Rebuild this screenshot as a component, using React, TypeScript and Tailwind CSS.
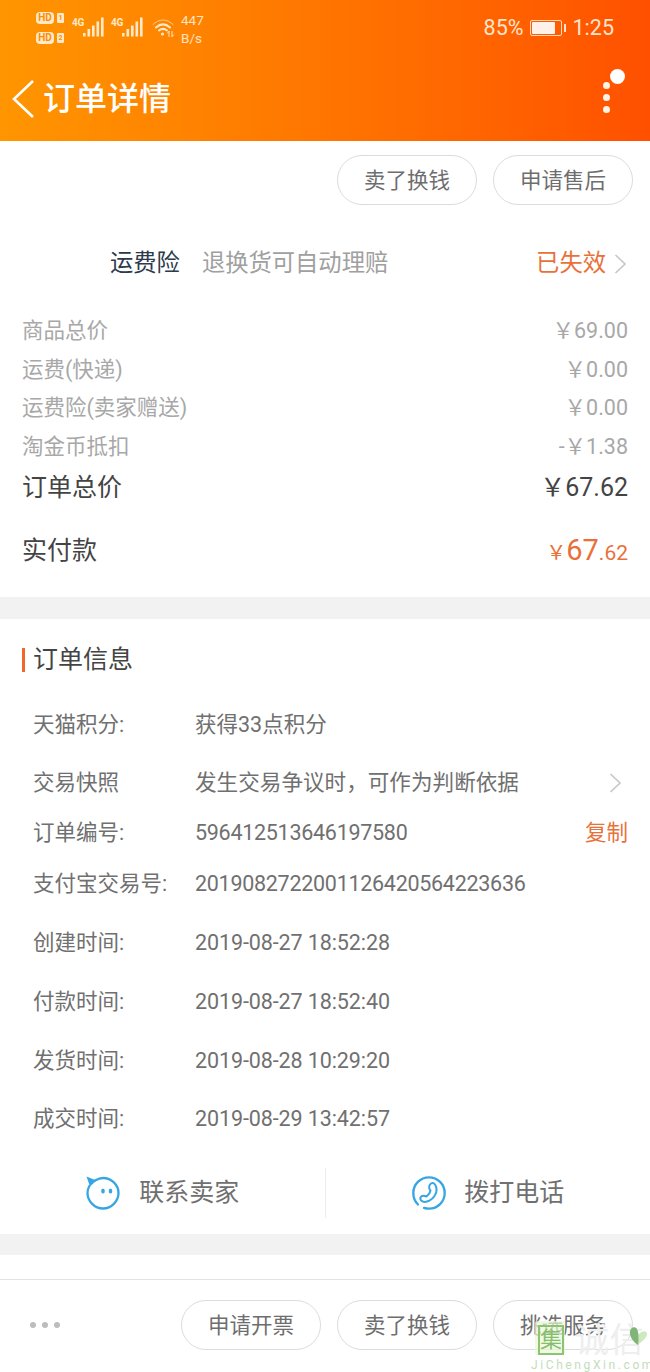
const cjk = 'font-["Roboto","Noto_Sans_CJK_SC",sans-serif]';

const priceRows = [
    { label: '商品总价', value: '￥69.00', h: 'h-[39px]' },
    { label: '运费(快递)', value: '￥0.00', h: 'h-[38px]' },
    { label: '运费险(卖家赠送)', value: '￥0.00', h: 'h-[39px]' },
    { label: '淘金币抵扣', value: '-￥1.38', h: 'h-[39px]' },
];

const infoRows = [
    { label: '天猫积分:', value: '获得33点积分', h: 'h-[58px]', extra: '' },
    { label: '交易快照', value: '发生交易争议时，可作为判断依据', h: 'h-[58px]', extra: 'text-[21.6px]' },
    { label: '订单编号:', value: '596412513646197580', h: 'h-[43px]', extra: 'tracking-[-0.28px]' },
    { label: '支付宝交易号:', value: '2019082722001126420564223636', h: 'h-[58px]', extra: 'tracking-[-0.28px]' },
    { label: '创建时间:', value: '2019-08-27 18:52:28', h: 'h-[60px]', extra: 'tracking-[-0.1px]' },
    { label: '付款时间:', value: '2019-08-27 18:52:40', h: 'h-[59px]', extra: 'tracking-[-0.1px]' },
    { label: '发货时间:', value: '2019-08-28 10:29:20', h: 'h-[58px]', extra: 'tracking-[-0.1px]' },
    { label: '成交时间:', value: '2019-08-29 13:42:57', h: 'h-[59px]', extra: 'tracking-[-0.1px]' },
];

function Pill({ text }: { text: string }) {
    return (
        <div className="flex h-[50px] w-[140px] items-center justify-center rounded-full border border-[#dcdcdc] pt-[3px] text-[21.5px] text-[#6e6e6e]">
            {text}
        </div>
    );
}

function Chevron({ className }: { className: string }) {
    return (
        <svg viewBox="0 0 13 20" className={`h-[20px] w-[13px] shrink-0 ${className}`} fill="none" stroke="#c8c8c8" strokeWidth="1.7">
            <path d="M1.5 1L11 10L1.5 19" />
        </svg>
    );
}

function Bars() {
    return (
        <div className="relative h-[22px] w-[34px]">
            <span className="absolute left-0 top-[1px] text-[10px] font-bold leading-[12px] tracking-[-0.3px] text-[#ffe9c8]">4G</span>
            <svg viewBox="0 0 34 22" className="absolute inset-0 h-full w-full">
                <g fill="#ffe9c8">
                    <rect x="11" y="17" width="2.6" height="3.5" />
                    <rect x="15.5" y="13" width="2.6" height="7.5" />
                    <rect x="20" y="9.5" width="2.6" height="11" />
                    <rect x="24.5" y="5.5" width="2.6" height="15" />
                    <rect x="29" y="1.5" width="2.6" height="19" />
                </g>
            </svg>
        </div>
    );
}

function HdTag({ n }: { n: string }) {
    return (
        <div className="flex items-center gap-[3px]">
            <span className="flex h-[12px] w-[18px] items-center justify-center rounded-[4px] bg-[#ffe9c8] text-[10px] font-bold leading-none text-[#ff8c00]">
                HD
            </span>
            <span className="flex h-[10px] w-[7px] items-center justify-center rounded-[1px] bg-[#ffe9c8] text-[7px] font-bold leading-none text-[#ff8c00]">
                {n}
            </span>
        </div>
    );
}

function StatusBar() {
    return (
        <div className="flex h-[56px] items-start justify-between pl-[36px] pr-[36px]">
            <div className="flex items-start pt-[11px]">
                <div className="flex flex-col gap-[8px] pt-[1px]">
                    <HdTag n="1" />
                    <HdTag n="2" />
                </div>
                <div className="ml-[8px] mt-[5px] flex gap-[5px]">
                    <Bars />
                    <Bars />
                </div>
                <svg viewBox="0 0 24 24" className="ml-[6px] mt-[5px] h-[24px] w-[24px]" fill="none" stroke="#ffe9c8" strokeLinecap="round">
                    <path d="M2 8.5C8 2.5 16 2.5 22 8.5" strokeWidth="1" opacity="0.7" />
                    <path d="M5 11.5C9.5 7.5 14.5 7.5 19 11.5" strokeWidth="2" />
                    <path d="M8 14.5C10.5 12.5 13.5 12.5 16 14.5" strokeWidth="2" />
                    <circle cx="11.5" cy="18" r="1.6" fill="#ffe9c8" stroke="none" />
                    <path d="M18 15.5V20.5M16.5 17L18 15.5M21 15.5V20.5M21 20.5L22.5 19" strokeWidth="1" />
                </svg>
                <div className="ml-[6px] flex flex-col text-[13.5px] leading-[18px] text-[#ffe4c0]">
                    <span>447</span>
                    <span>B/s</span>
                </div>
            </div>
            <div className="flex items-center pt-[14px] text-[21.5px] leading-[28px] text-[#ffe4cc]">
                <span>85%</span>
                <div className="ml-[6px] flex items-center">
                    <div className="h-[16px] w-[32px] rounded-[2px] border border-[#ffd9bd] p-[1px]">
                        <div className="h-full w-[85%] rounded-[1px] bg-[#fff0e8]" />
                    </div>
                    <div className="ml-[2px] h-[8px] w-[2px] bg-[#ffe4cc]" />
                </div>
                <span className="ml-[7px]">1:25</span>
            </div>
        </div>
    );
}

function SmileIcon() {
    return (
        <svg viewBox="0 0 36 36" className="h-[36px] w-[36px]" fill="none">
            <path d="M10 5.5C12.4 4.2 15.1 3 18 3C26.3 3 33.5 9.7 33.5 18C33.5 26.3 26.3 33.5 18 33.5C9.7 33.5 2.5 26.3 2.5 18C2.5 15.5 3.2 13 4.4 11" stroke="#35a6e3" strokeWidth="2.3" strokeLinecap="round" />
            <path d="M1.5 1.5L11.5 5.5L5 11.5Z" fill="#35a6e3" />
            <ellipse cx="18" cy="16" rx="1.8" ry="2.6" fill="#35a6e3" />
            <ellipse cx="25.5" cy="16" rx="1.8" ry="2.6" fill="#35a6e3" />
        </svg>
    );
}

function PhoneIcon() {
    return (
        <svg viewBox="0 0 36 36" className="h-[36px] w-[36px]" fill="none" stroke="#35a6e3" strokeLinecap="round" strokeLinejoin="round">
            <path d="M7 29.5C4 26.6 2.3 22.5 2.3 18C2.3 9.3 9.3 2.3 18 2.3C26.7 2.3 33.7 9.3 33.7 18C33.7 26.7 26.7 33.7 18 33.7C16.2 33.7 14.5 33.4 13 32.9" strokeWidth="2.3" />
            <path d="M20 8.5C21.5 7.6 23 8 24 9.5C26 12.5 26 17 23.5 21C21 25 16 27.5 12.5 26.8C10.3 26.3 8.6 24.3 9.5 22.5C10.3 21 12.2 20.5 14 21L15.5 21.5C17.5 20 19.2 17.5 19.5 15.5L18.5 14C17.7 12.5 18.3 9.5 20 8.5Z" strokeWidth="2" />
        </svg>
    );
}

function Watermark() {
    return (
        <div className="absolute bottom-0 right-0 h-[50px] w-[119px]">
            <div className="absolute left-[4px] top-[-1px] h-[34px] w-[30px] rounded-[2px] bg-[#eaf7d8]/70" />
            <div className="absolute left-[7px] top-[3px] flex h-[30px] w-[26px] items-center justify-center border-[2px] border-[#8cc474] text-[22px] leading-none text-[#86bf6c]">
                集
            </div>
            <div className="absolute left-[44px] top-[0px] text-[34px] leading-[36px] tracking-[0.5px] text-[#eeeeee]">诚信</div>
            <svg viewBox="0 0 20 20" className="absolute left-[97px] top-[4px] h-[20px] w-[20px]">
                <path d="M10 19C13 16 19 12 19 8C19 5 15 4 11 8Z" fill="#cde9bd" />
                <path d="M10 19C5 16 1 10 2 5C3 1 7 0 9 3C11 7 11 14 10 19Z" fill="#7fb577" />
            </svg>
            <div className="absolute left-0 top-[37px] whitespace-nowrap text-[12px] leading-[13px] tracking-[2.6px] text-[#c3dcbc]">
                JiChengXin.com
            </div>
        </div>
    );
}

export default function App() {
    return (
        <div className={`relative flex h-[1372px] w-[650px] flex-col overflow-hidden bg-white ${cjk}`}>
            <div className="h-[141px] bg-gradient-to-r from-[#ff9500] via-[#ff7500] to-[#ff5000]">
                <StatusBar />
                <div className="flex h-[85px] items-center justify-between pr-[40px]">
                    <div className="flex items-center">
                        <svg viewBox="0 0 24 40" className="ml-[11px] h-[40px] w-[24px]" fill="none" stroke="white" strokeWidth="2.6">
                            <path d="M22 2L3 20L22 38" />
                        </svg>
                        <span className="ml-[8px] text-[32px] font-medium leading-none text-white">订单详情</span>
                    </div>
                    <div className="relative mt-[-3px] flex flex-col gap-[5px]">
                        <span className="h-[7px] w-[7px] rounded-full bg-[#fff3e8]" />
                        <span className="h-[7px] w-[7px] rounded-full bg-[#fff3e8]" />
                        <span className="h-[7px] w-[7px] rounded-full bg-[#fff3e8]" />
                        <span className="absolute left-[7px] top-[-13px] h-[15px] w-[15px] rounded-full bg-white" />
                    </div>
                </div>
            </div>

            <div className="flex justify-end gap-[16px] pr-[17px] pt-[14px]">
                <Pill text="卖了换钱" />
                <Pill text="申请售后" />
            </div>

            <div className="mt-[23px] flex h-[71px] items-center pl-[110px] pr-[23px]">
                <span className="text-[23.3px] text-[#2c3a4b]">运费险</span>
                <span className="ml-[22px] text-[23.3px] text-[#a0a0a0]">退换货可自动理赔</span>
                <span className="ml-auto text-[23.3px] text-[#e8713a]">已失效</span>
                <Chevron className="ml-[8px]" />
            </div>

            <div className="mt-[13px] px-[22px]">
                {priceRows.map((row) => (
                    <div key={row.label} className={`flex items-center justify-between text-[21.5px] text-[#a8a8a8] ${row.h}`}>
                        <span>{row.label}</span>
                        <span>{row.value}</span>
                    </div>
                ))}
                <div className="flex h-[42px] items-center justify-between text-[25px] text-[#444]">
                    <span>订单总价</span>
                    <span>￥67.62</span>
                </div>
                <div className="mt-[20px] flex h-[44px] items-center justify-between text-[25px] text-[#444]">
                    <span>实付款</span>
                    <span className="flex items-baseline text-[#e8713a]">
                        <span className="text-[20px]">￥</span>
                        <span className="text-[29px]">67</span>
                        <span className="text-[21px]">.62</span>
                    </span>
                </div>
            </div>

            <div className="mt-[24px] h-[22px] bg-[#f2f2f2]" />

            <div className="flex h-[77px] items-center pl-[22px] pt-[5px]">
                <span className="h-[24px] w-[3px] bg-[#f0682a]" />
                <span className="ml-[8px] text-[25px] text-[#444]">订单信息</span>
            </div>

            <div className="pl-[33px] pr-[22px]">
                {infoRows.map((row) => (
                    <div key={row.label} className={`flex items-center text-[21.5px] text-[#707070] ${row.h}`}>
                        <span className="w-[162px] shrink-0">{row.label}</span>
                        <span className={row.extra}>{row.value}</span>
                        {row.label === '交易快照' && <Chevron className="ml-auto mr-[6px]" />}
                        {row.label === '订单编号:' && <span className="ml-auto text-[#e8713a]">复制</span>}
                    </div>
                ))}
            </div>

            <div className="mt-[16px] flex h-[56px] items-center">
                <div className="flex flex-1 items-center justify-center gap-[18px]">
                    <SmileIcon />
                    <span className="text-[25px] text-[#707070]">联系卖家</span>
                </div>
                <div className="h-[50px] w-px bg-[#ececec]" />
                <div className="flex flex-1 items-center justify-center gap-[17px]">
                    <PhoneIcon />
                    <span className="text-[25px] text-[#707070]">拨打电话</span>
                </div>
            </div>

            <div className="mt-[13px] h-[21px] bg-[#f2f2f2]" />

            <div className="mt-[24px] flex flex-1 items-start justify-between border-t border-[#e3e3e3] pl-[30px] pr-[17px] pt-[20px]">
                <div className="mt-[22px] flex gap-[6px]">
                    <span className="h-[6px] w-[6px] rounded-full bg-[#bdbdbd]" />
                    <span className="h-[6px] w-[6px] rounded-full bg-[#bdbdbd]" />
                    <span className="h-[6px] w-[6px] rounded-full bg-[#bdbdbd]" />
                </div>
                <div className="flex gap-[16px]">
                    <Pill text="申请开票" />
                    <Pill text="卖了换钱" />
                    <Pill text="挑选服务" />
                </div>
            </div>

            <Watermark />
        </div>
    );
}
